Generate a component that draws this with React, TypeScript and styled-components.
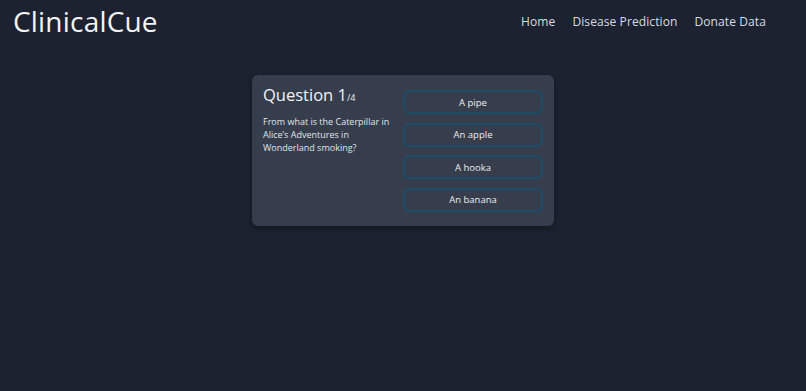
import React from 'react';
import styled, { createGlobalStyle } from 'styled-components';

const GlobalStyle = createGlobalStyle`
	html, body {
		margin: 0;
		padding: 0;
		background-color: #1c2230;
	}
	body {
		font-family: 'Open Sans', 'DejaVu Sans', sans-serif;
		color: #e8eaee;
	}
`;

const Page = styled.div`
	min-height: 391px;
	background-color: #1c2230;
`;

const Header = styled.header`
	display: flex;
	align-items: center;
	justify-content: space-between;
	height: 42px;
	padding: 0 40px 0 13px;
`;

const Logo = styled.h1`
	margin: 0;
	font-size: 28px;
	font-weight: 400;
	letter-spacing: 0.2px;
	color: #f2f3f5;
`;

const Nav = styled.nav`
	display: flex;
	gap: 17px;
	a {
		color: #d9dce2;
		text-decoration: none;
		font-size: 12px;
		letter-spacing: 0.1px;
	}
`;

const Main = styled.main`
	display: flex;
	justify-content: center;
	padding-top: 33px;
`;

const Card = styled.div`
	display: flex;
	gap: 8px;
	width: 302px;
	box-sizing: border-box;
	padding: 13px 11px 14px 11px;
	background-color: #363d4c;
	border-radius: 6px;
	box-shadow: 0 2px 6px rgba(0, 0, 0, 0.35);
`;

const QuestionBlock = styled.div`
	flex: 1;
`;

const QuestionTitle = styled.div`
	font-size: 16.5px;
	line-height: 14px;
	color: #f2f3f5;
	margin-bottom: 10px;
	span {
		font-size: 9px;
	}
`;

const QuestionText = styled.p`
	margin: 0;
	font-size: 9px;
	line-height: 13px;
	color: #e1e4ea;
`;

const Answers = styled.div`
	display: flex;
	flex-direction: column;
	gap: 8.67px;
	padding-top: 2px;
`;

const AnswerButton = styled.button`
	width: 140px;
	height: 24px;
	box-sizing: border-box;
	background-color: #363d4c;
	border: 2px solid #1f4d68;
	border-radius: 7px;
	color: #eceef2;
	font-family: inherit;
	font-size: 9.5px;
	cursor: pointer;
`;

const answers = ['A pipe', 'An apple', 'A hooka', 'An banana'];

export default function App() {
	return (
		<Page>
			<GlobalStyle />
			<Header>
				<Logo>ClinicalCue</Logo>
				<Nav>
					<a href="#">Home</a>
					<a href="#">Disease Prediction</a>
					<a href="#">Donate Data</a>
				</Nav>
			</Header>
			<Main>
				<Card>
					<QuestionBlock>
						<QuestionTitle>
							Question 1<span>/4</span>
						</QuestionTitle>
						<QuestionText>
							From what is the Caterpillar in Alice’s Adventures in Wonderland
							smoking?
						</QuestionText>
					</QuestionBlock>
					<Answers>
						{answers.map(a => (
							<AnswerButton key={a}>{a}</AnswerButton>
						))}
					</Answers>
				</Card>
			</Main>
		</Page>
	);
}
